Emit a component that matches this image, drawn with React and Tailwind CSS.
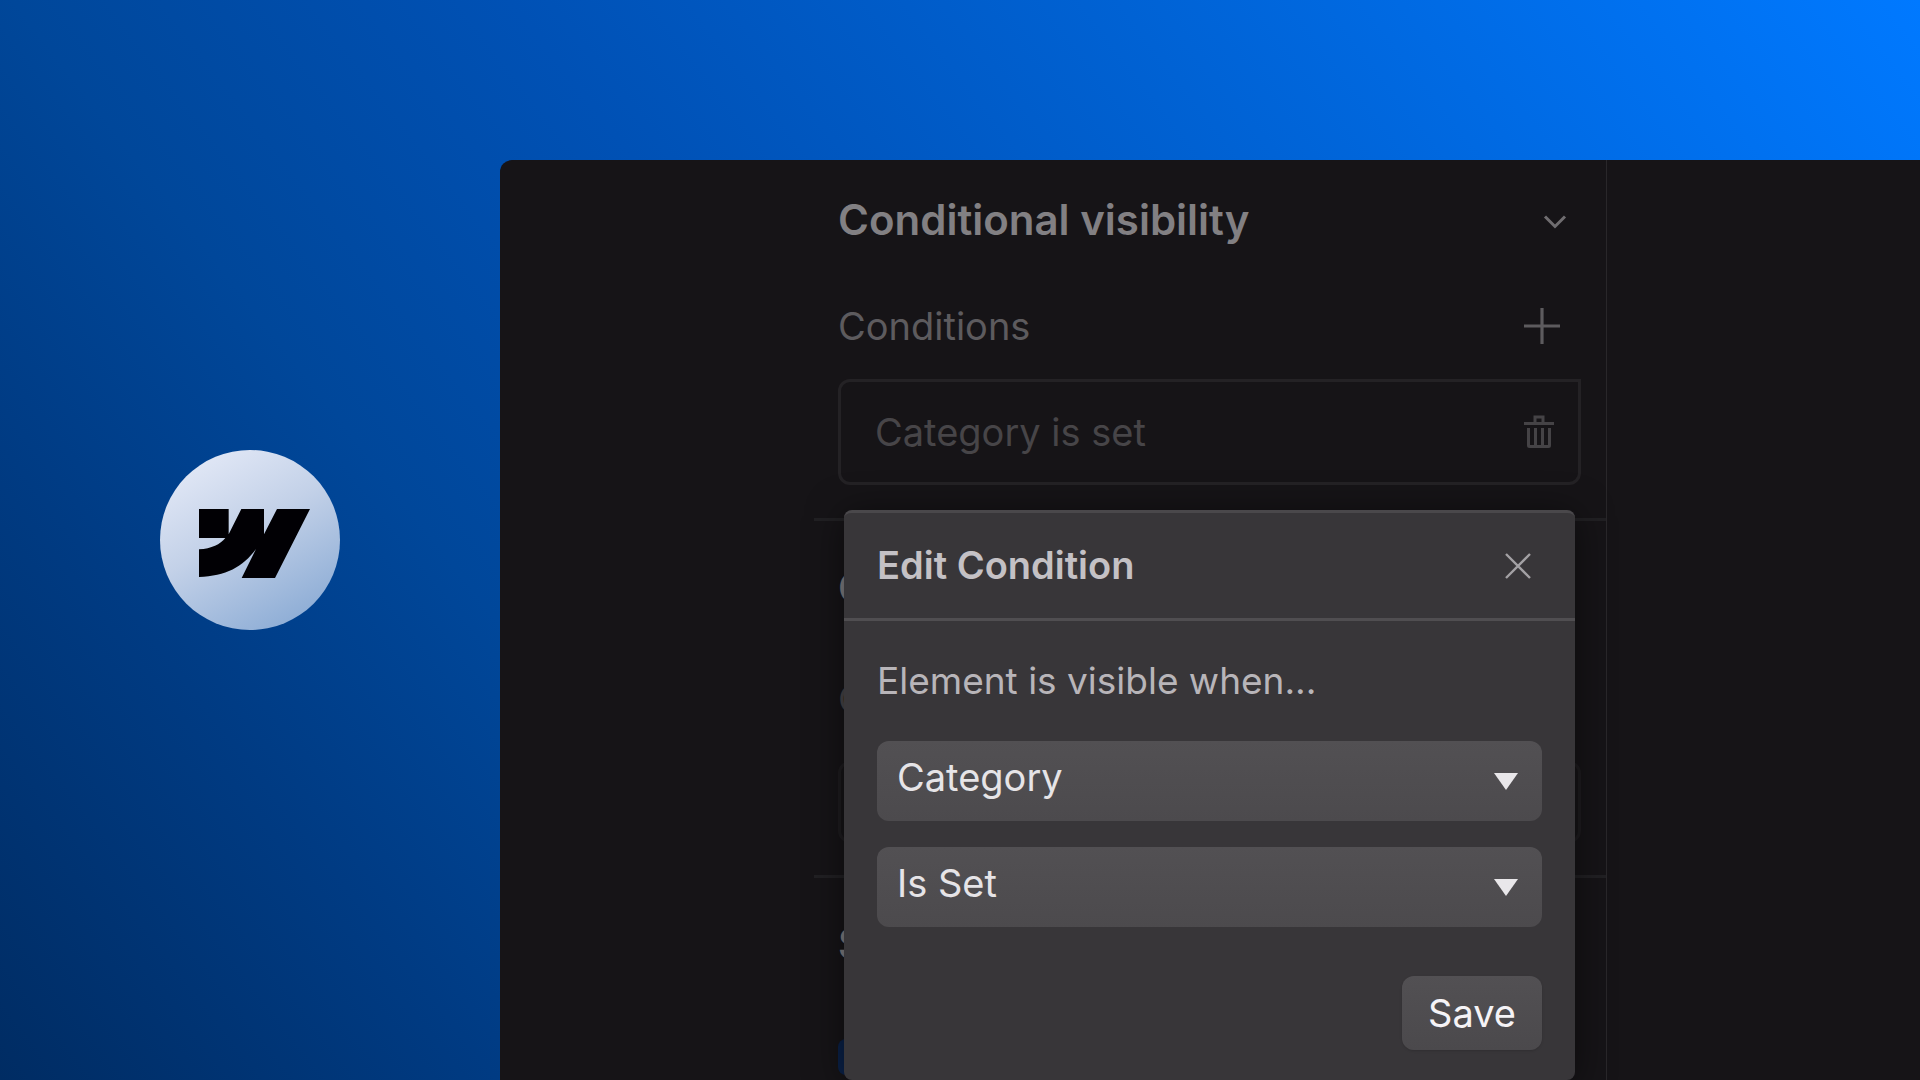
import { useState } from 'react';

const Logo = () => (
    <svg viewBox="0 0 333 207" className="w-[111px] h-[69px]" fill="#010004" role="img" aria-label="Webflow">
        <path d="M0 0H89V76L127 0H195V76L234 0H333L228 207H128L171 120C132 174 80 201 0 204V121C38 119 64 106 79 87H0Z" />
    </svg>
);

const ChevronIcon = () => (
    <svg viewBox="0 0 24 16" className="w-6 h-4" fill="none" stroke="currentColor" strokeWidth="3">
        <path d="M2 2.5L12 12.5L22 2.5" />
    </svg>
);

const PlusIcon = () => (
    <svg viewBox="0 0 38 38" className="w-[38px] h-[38px]" fill="none" stroke="currentColor" strokeWidth="3.2">
        <path d="M19 1V37M1 19H37" />
    </svg>
);

const TrashIcon = () => (
    <svg viewBox="0 0 30 34" className="w-[30px] h-[34px]" fill="none" stroke="currentColor" strokeWidth="3">
        <path d="M0 8.5H30M11 8.5V2H19V8.5" />
        <path d="M4.5 13V30.5Q4.5 31.5 5.5 31.5H24.5Q25.5 31.5 25.5 30.5V13M11.5 13V31M18.5 13V31" />
    </svg>
);

const CloseIcon = () => (
    <svg viewBox="0 0 26 26" className="w-[26px] h-[26px]" fill="none" stroke="currentColor" strokeWidth="2.4">
        <path d="M1 1L25 25M25 1L1 25" />
    </svg>
);

const SelectField = ({ label, value, options, onChange }) => (
    <div className="relative">
        <select
            aria-label={label}
            value={value}
            onChange={(e) => onChange(e.target.value)}
            className="block w-full h-20 appearance-none rounded-xl bg-linear-to-b from-[#525053] to-[#4c4a4d] pl-5 pr-16 pb-2 text-[38px] text-[#e6e4e7] outline-none"
        >
            {options.map((option) => (
                <option key={option}>{option}</option>
            ))}
        </select>
        <svg viewBox="0 0 24 17" className="pointer-events-none absolute right-6 top-8 w-6 h-[17px]" fill="#e9e7ea">
            <path d="M0 0H24L12 17Z" />
        </svg>
    </div>
);

const EditCondition = () => {
    const [field, setField] = useState('Category');
    const [operator, setOperator] = useState('Is Set');

    return (
        <div
            role="dialog"
            aria-labelledby="edit-condition"
            className="absolute top-full left-1.5 right-1.5 mt-[25px] rounded-lg border-t-3 border-[#4a484b] bg-[#383639] shadow-[0_4px_36px_rgba(0,0,0,0.5)]"
        >
            <div className="flex items-center justify-between h-[108px] border-b-3 border-[#504e51] pl-[33px] pr-11">
                <h3 id="edit-condition" className="text-[38px] font-semibold text-[#c4c1c5]">Edit Condition</h3>
                <button type="button" aria-label="Close" className="text-[#a3a1a4]">
                    <CloseIcon />
                </button>
            </div>
            <form className="flex flex-col px-[33px] pt-8 pb-[30px]" onSubmit={(e) => e.preventDefault()}>
                <p className="text-[37px] leading-14 text-[#b8b5b9]">Element is visible when...</p>
                <div className="flex flex-col gap-[26px] mt-8">
                    <SelectField label="Field" value={field} options={['Category', 'Name', 'Slug']} onChange={setField} />
                    <SelectField label="Operator" value={operator} options={['Is Set', 'Is Not Set']} onChange={setOperator} />
                </div>
                <button
                    type="submit"
                    className="self-end mt-[49px] h-[74px] px-[26px] rounded-xl bg-linear-to-b from-[#525053] to-[#4b494c] text-[38px] text-[#f5f3f6] shadow-sm"
                >
                    Save
                </button>
            </form>
        </div>
    );
};

const SectionHeader = ({ title }) => (
    <div className="flex items-center justify-between h-14 pr-3.5">
        <h2 className="text-[42px] font-semibold text-[#828083]">{title}</h2>
        <button type="button" aria-label={`Toggle ${title}`} className="pt-1.5 text-[#6f6d70]">
            <ChevronIcon />
        </button>
    </div>
);

const App = () => {
    return (
        <div className="flex h-screen overflow-hidden bg-[linear-gradient(52deg,#002c63_0%,#003b83_18%,#00479a_31%,#0051b5_49%,#0062d4_71%,#0079ff_100%)] font-['Inter',sans-serif]">
            <aside className="flex w-[500px] shrink-0 items-center justify-center">
                <div className="flex items-center justify-center w-[180px] h-[180px] pl-2 pt-1.5 rounded-full bg-[linear-gradient(150deg,#e6ebf8_5%,#c3d1e8_45%,#86a8d3_95%)]">
                    <Logo />
                </div>
            </aside>

            <main className="flex-1 min-w-0 mt-40 flex rounded-tl-xl bg-[#161417] overflow-hidden">
                <div className="ml-[314px] w-[793px] shrink-0 border-r border-[#29272a]">
                    {/* Conditional visibility */}
                    <section className="border-b-3 border-[#212023] pl-6 pr-[25px] pt-[31px] pb-[33px]">
                        <SectionHeader title="Conditional visibility" />
                        <div className="flex items-center justify-between h-14 mt-[51px] pr-5">
                            <p className="text-[38px] text-[#5d5b5e]">Conditions</p>
                            <button type="button" aria-label="Add condition" className="text-[#5d5b5e]">
                                <PlusIcon />
                            </button>
                        </div>
                        <div className="relative z-10 mt-[25px]">
                            <div className="flex items-center justify-between h-[106px] rounded-xl rounded-tr-none border-3 border-[#242225] pl-[34px] pr-6">
                                <span className="text-[38px] text-[#474548]">Category is set</span>
                                <button type="button" aria-label="Delete condition" className="text-[#454346]">
                                    <TrashIcon />
                                </button>
                            </div>
                            <EditCondition />
                        </div>
                    </section>

                    {/* Custom attributes */}
                    <section className="border-b-3 border-[#212023] pl-6 pr-[25px] pt-[38px] pb-8">
                        <SectionHeader title="Custom attributes" />
                        <p className="mt-14 text-[38px] leading-14 text-[#474548]">Custom</p>
                        <div className="h-[82px] mt-[34px] rounded-xl border-3 border-[#1e1c1f]" />
                    </section>

                    {/* Search */}
                    <section className="pl-6 pr-[25px] pt-[37px]">
                        <SectionHeader title="Search" />
                        <div className="h-9 w-1/2 mt-[68px] rounded-lg bg-[#0a2148]" />
                    </section>
                </div>
            </main>
        </div>
    );
};

export default App;
